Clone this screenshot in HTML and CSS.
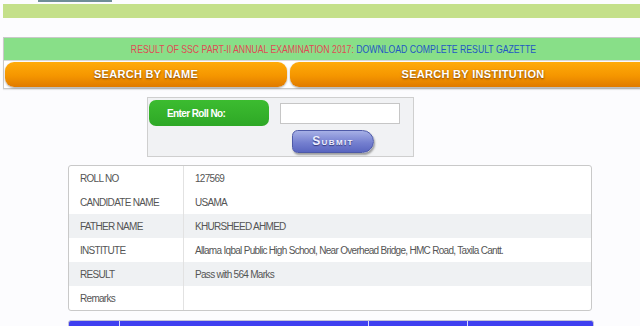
FILE: index.html
```html
<!DOCTYPE html>
<html lang="en">

<head>
  <meta charset="UTF-8">
  <meta name="viewport" content="width=device-width, initial-scale=1.0">
  <title>SSC Part-II Result 2017</title>
  <link rel="stylesheet" href="styles.css">
</head>

<body>
  <div class="top-strip"><span class="top-tab"></span></div>
  <div class="lime-bar"></div>

  <div class="notice-box">
    <div class="notice">
      <span class="notice-text">
        <span class="notice-red">RESULT OF SSC PART-II ANNUAL EXAMINATION 2017:</span>
        <a class="notice-link" href="#">DOWNLOAD COMPLETE RESULT GAZETTE</a>
      </span>
    </div>
    <div class="search-tabs">
      <a class="search-btn search-name" href="#">SEARCH BY NAME</a>
      <a class="search-btn search-inst" href="#">SEARCH BY INSTITUTION</a>
    </div>
  </div>

  <form class="roll-form">
    <div class="roll-row">
      <label class="roll-label" for="rollNo">Enter Roll No:</label>
      <input class="roll-input" type="text" id="rollNo">
    </div>
    <button type="button" class="submit-btn">Submit</button>
  </form>

  <table class="result-table">
    <tr>
      <td class="key">ROLL NO</td>
      <td>127569</td>
    </tr>
    <tr>
      <td class="key">CANDIDATE NAME</td>
      <td>USAMA</td>
    </tr>
    <tr class="alt">
      <td class="key">FATHER NAME</td>
      <td>KHURSHEED AHMED</td>
    </tr>
    <tr>
      <td class="key">INSTITUTE</td>
      <td>Allama Iqbal Public High School, Near Overhead Bridge, HMC Road, Taxila Cantt.</td>
    </tr>
    <tr class="alt">
      <td class="key">RESULT</td>
      <td>Pass with 564 Marks</td>
    </tr>
    <tr>
      <td class="key">Remarks</td>
      <td></td>
    </tr>
  </table>

  <div class="marks-head">
    <span class="mh-cell mh-1"></span>
    <span class="mh-cell mh-2"></span>
    <span class="mh-cell mh-3"></span>
    <span class="mh-cell mh-4"></span>
  </div>
</body>

</html>
```

FILE: styles.css
```css
body {
  margin: 0;
  padding: 0;
  background: #fcfcfe;
  font-family: "Liberation Sans", Arial, sans-serif;
  overflow: hidden;
}

.top-strip {
  height: 3px;
}

.top-tab {
  display: block;
  margin-left: 38px;
  width: 74px;
  height: 2px;
  background: #6f8e97;
}

.lime-bar {
  margin: 1px 0 0 3px;
  height: 14px;
  background: #c4e08a;
}

/* notice + search tabs */
.notice-box {
  margin: 19px -8px 0 3px;
  border: 1px solid #c9c9c9;
  border-right: none;
  background: #fff;
  padding-bottom: 1px;
  box-shadow: 0 1px 1px rgba(0, 0, 0, 0.08);
}

.notice {
  height: 22px;
  line-height: 22px;
  background: #88df88;
  text-align: center;
  font-size: 11px;
  padding-left: 15px;
  border-bottom: 1px solid #d8d8d8;
  white-space: nowrap;
}

/* the original text is rendered in a narrow face */
.notice-text {
  display: inline-block;
  transform: scaleX(0.79);
}

.notice-red {
  color: #e04a55;
}

.notice-link {
  color: #2257c4;
  text-decoration: none;
}

.search-tabs {
  display: flex;
  gap: 3px;
  padding: 1px 0 0 1px;
}

.search-btn {
  display: block;
  height: 25px;
  line-height: 25px;
  border-radius: 9px;
  background: linear-gradient(#ffab0a, #f59600 55%, #e07a00);
  box-shadow: 0 1px 2px rgba(0, 0, 0, 0.35);
  color: #fff;
  font-weight: bold;
  font-size: 11px;
  letter-spacing: 0.3px;
  text-align: center;
  text-decoration: none;
  text-shadow: 0 1px 2px rgba(90, 40, 0, 0.8);
}

.search-name {
  width: 282px;
}

.search-inst {
  flex: 1;
  padding-left: 8px;
}

/* roll number form */
.roll-form {
  margin: 8px 0 0 147px;
  width: 265px;
  height: 58px;
  border: 1px solid #cfcfcf;
  background: #f1f2f4;
}

.roll-row {
  display: flex;
  align-items: center;
  gap: 11px;
  padding: 2px 0 0 1px;
}

.roll-label {
  width: 102px;
  height: 26px;
  line-height: 27px;
  padding-left: 18px;
  border-radius: 7px;
  background: linear-gradient(#3cbc30, #2ea826);
  color: #fff;
  font-weight: bold;
  font-size: 10px;
  letter-spacing: -0.6px;
}

.roll-input {
  width: 120px;
  height: 21px;
  box-sizing: border-box;
  border: 1px solid #c6c6c6;
  background: #fff;
  margin: 0;
  padding: 0;
}

.submit-btn {
  display: block;
  margin: 4px 0 0 144px;
  width: 82px;
  height: 23px;
  padding: 0 0 1px 0;
  border: 1px solid #4e5aa8;
  border-radius: 6px 12px 12px 6px;
  background: linear-gradient(#a6b0e6, #7580d0 55%, #5a66c0);
  box-shadow: 1px 2px 2px rgba(0, 0, 0, 0.35);
  color: #eef0ff;
  font-family: "Liberation Sans", Arial, sans-serif;
  font-weight: bold;
  font-size: 12px;
  font-variant: small-caps;
  letter-spacing: 1.4px;
  text-shadow: 0 1px 1px rgba(30, 30, 90, 0.7);
  cursor: pointer;
}

/* result details */
.result-table {
  margin: 8px 0 0 68px;
  width: 524px;
  border-collapse: separate;
  border-spacing: 0;
  border: 1px solid #c9c9c9;
  border-radius: 3px;
  background: #fff;
  font-size: 10px;
  letter-spacing: -0.7px;
  color: #555;
}

.result-table td {
  height: 24px;
  padding: 0 0 0 11px;
  vertical-align: middle;
}

.result-table td.key {
  width: 103px;
  border-right: 1px solid #e2e2e2;
}

.result-table tr.alt td {
  background: #eff1f3;
}

/* marks table header (cut off at page bottom) */
.marks-head {
  display: flex;
  margin: 9px 0 0 68px;
  width: 524px;
  height: 20px;
  border: 1px solid #c4c4d8;
  border-radius: 3px 3px 0 0;
  background: #3f3ff0;
}

.mh-cell {
  border-right: 1px solid #d8d8ff;
}

.mh-1 {
  width: 50px;
}

.mh-2 {
  width: 248px;
}

.mh-3 {
  width: 98px;
}

.mh-4 {
  flex: 1;
  border-right: none;
}
```
